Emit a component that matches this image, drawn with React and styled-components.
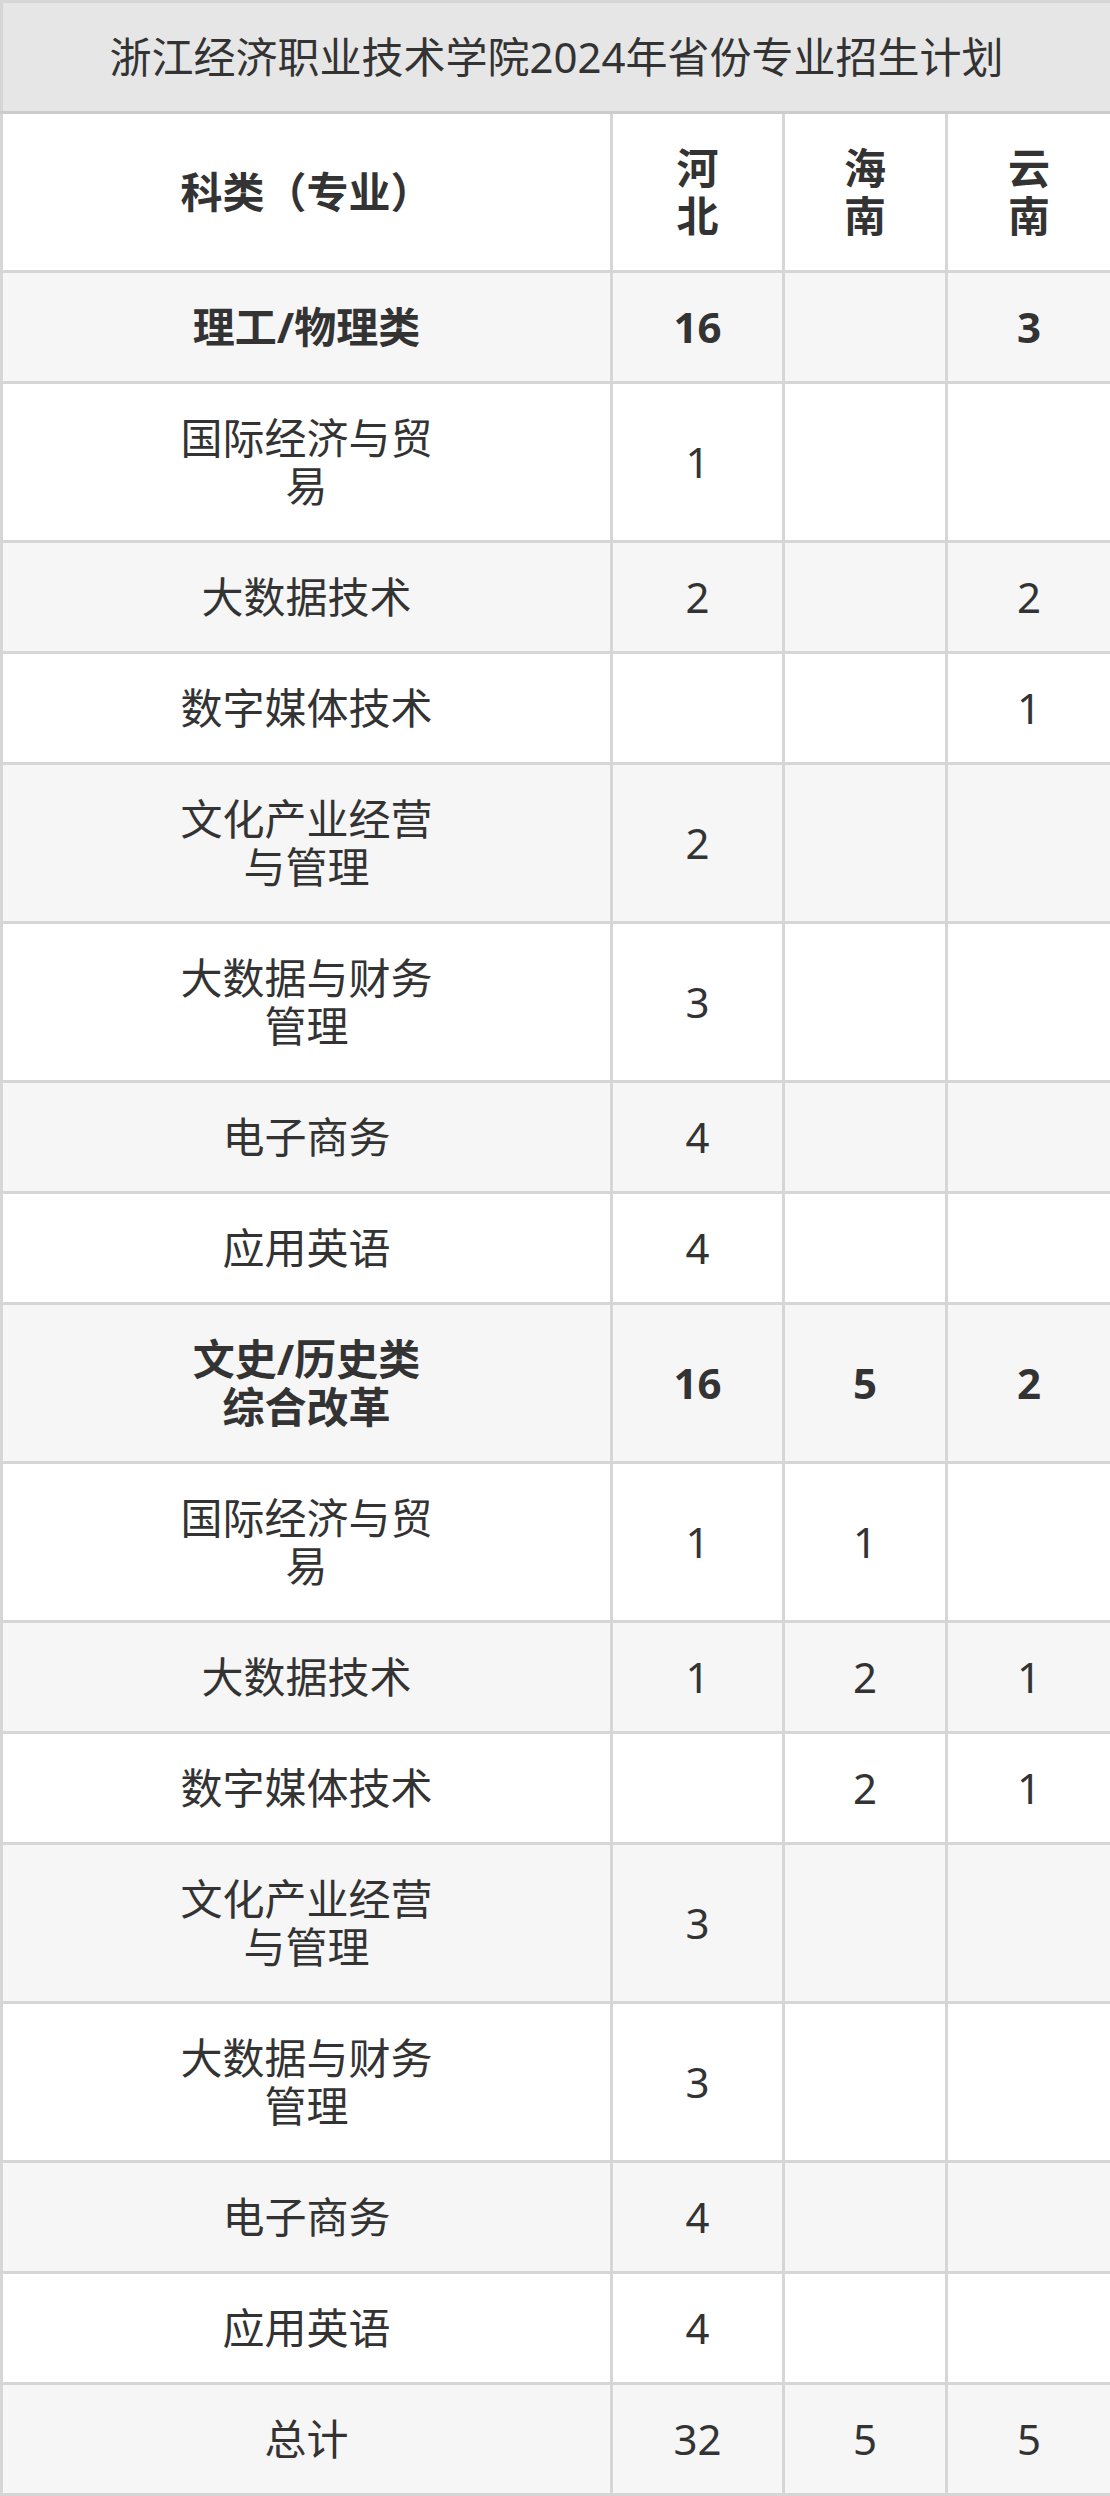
import React from 'react';
import styled, { createGlobalStyle } from 'styled-components';

const GlobalStyle = createGlobalStyle`
  body {
    margin: 0;
    background: #fff;
    font-family: 'Noto Sans', 'Noto Sans CJK SC', sans-serif;
  }
`;

const Table = styled.table`
  width: 1110px;
  border-collapse: collapse;
  table-layout: fixed;
  color: #333;
  font-size: 42px;
  line-height: 48px;
`;

const Col = styled.col`
  width: ${(p) => p.$width};
`;

const Row = styled.tr`
  background: ${(p) => (p.$striped ? '#f6f6f6' : '#fff')};
`;

const Cell = styled.td`
  border: 3px solid #d6d6d6;
  padding: 30px 0;
  text-align: center;
  vertical-align: middle;
  font-weight: ${(p) => (p.$bold ? 700 : 400)};
`;

const TitleCell = styled.th`
  border: 3px solid #d6d6d6;
  border-bottom-color: #cccccc;
  background: #e6e6e6;
  padding: 30px 0;
  font-weight: 400;
  text-align: center;
`;

const HeadCell = styled.th`
  border: 3px solid #d6d6d6;
  padding: 30px 0;
  font-weight: 700;
  text-align: center;
  vertical-align: middle;
`;

const Stack = styled.span`
  display: inline-block;
  width: 1em;
  word-break: break-all;
`;

const Label = styled.span`
  display: inline-block;
  max-width: 6.2em;
`;

const columns = ['610px', '172px', '163px', '165px'];
const provinces = ['河北', '海南', '云南'];

const majors = [
  '国际经济与贸易',
  '大数据技术',
  '数字媒体技术',
  '文化产业经营与管理',
  '大数据与财务管理',
  '电子商务',
  '应用英语',
];

const rows = [
  { label: '理工/物理类', values: ['16', '', '3'], bold: true },
  ...[['1', '', ''], ['2', '', '2'], ['', '', '1'], ['2', '', ''], ['3', '', ''], ['4', '', ''], ['4', '', '']].map(
    (values, i) => ({ label: majors[i], values })
  ),
  { label: '文史/历史类综合改革', values: ['16', '5', '2'], bold: true },
  ...[['1', '1', ''], ['1', '2', '1'], ['', '2', '1'], ['3', '', ''], ['3', '', ''], ['4', '', ''], ['4', '', '']].map(
    (values, i) => ({ label: majors[i], values })
  ),
  { label: '总计', values: ['32', '5', '5'] },
];

export default function App() {
  return (
    <>
      <GlobalStyle />
      <Table>
        <colgroup>
          {columns.map((w, i) => (
            <Col key={i} $width={w} />
          ))}
        </colgroup>
        <thead>
          <tr>
            <TitleCell colSpan={4}>浙江经济职业技术学院2024年省份专业招生计划</TitleCell>
          </tr>
          <tr>
            <HeadCell>科类（专业）</HeadCell>
            {provinces.map((name) => (
              <HeadCell key={name}>
                <Stack>{name}</Stack>
              </HeadCell>
            ))}
          </tr>
        </thead>
        <tbody>
          {rows.map((r, i) => (
            <Row key={i} $striped={i % 2 === 0}>
              <Cell $bold={r.bold}>
                <Label>{r.label}</Label>
              </Cell>
              {r.values.map((v, j) => (
                <Cell key={j} $bold={r.bold}>
                  {v}
                </Cell>
              ))}
            </Row>
          ))}
        </tbody>
      </Table>
    </>
  );
}
